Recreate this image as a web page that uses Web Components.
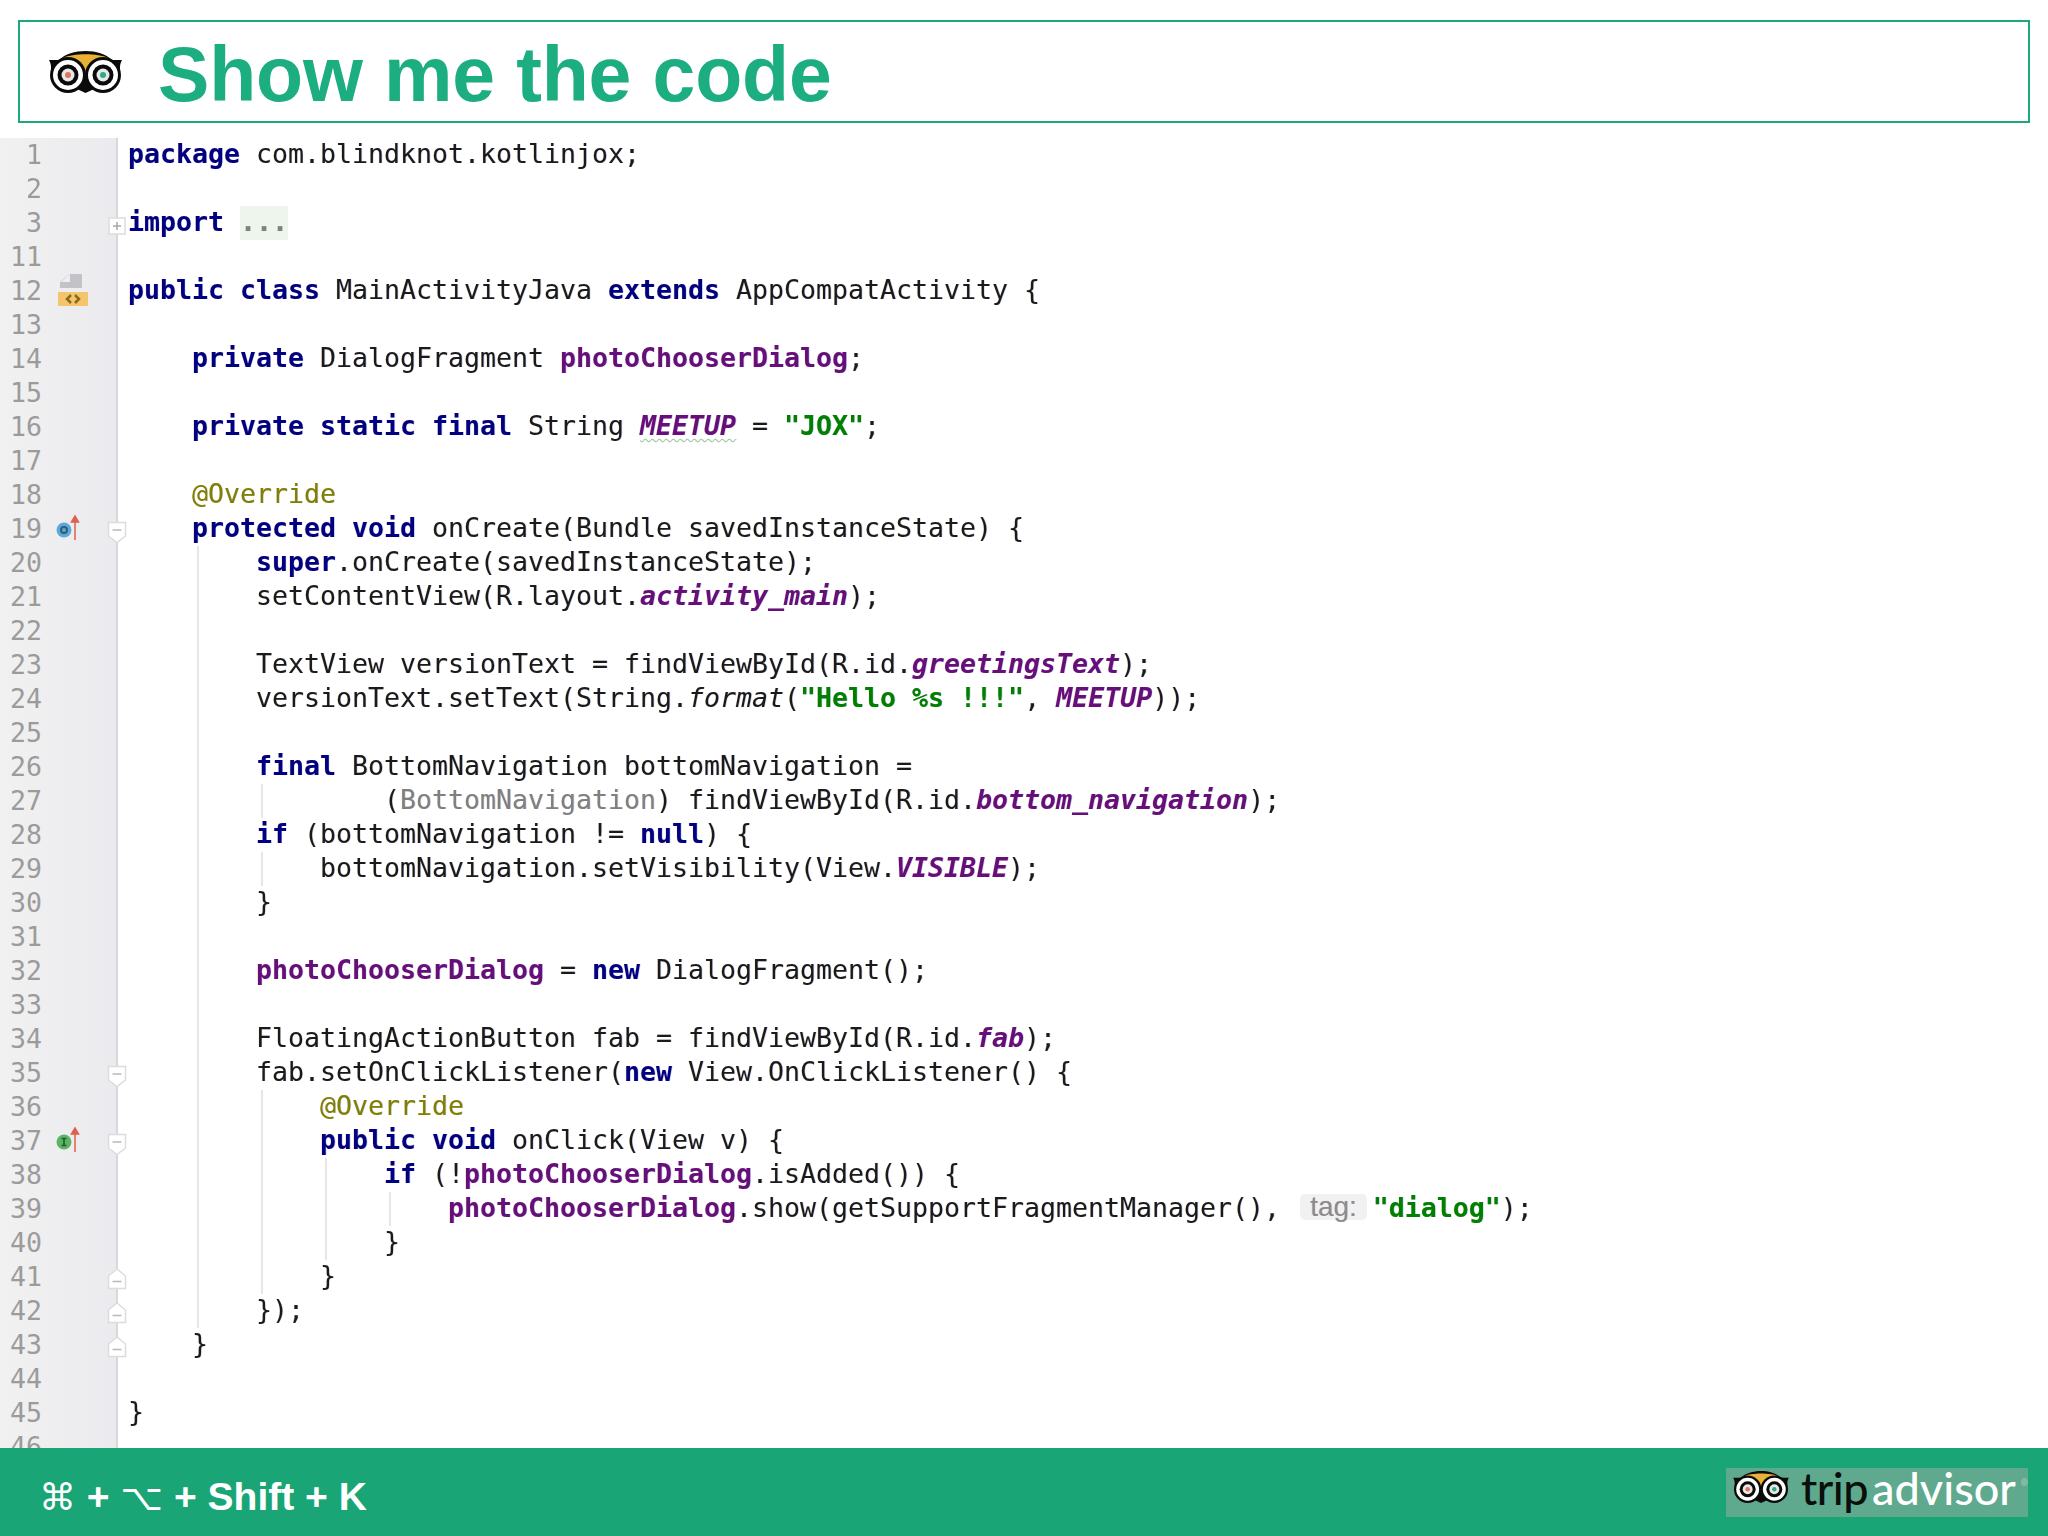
<!DOCTYPE html>
<html>
<head>
<meta charset="utf-8">
<title>Show me the code</title>
<style>
  html, body { margin: 0; height: 100%; background: #fff; }
  code-slide { height: 1536px; }
  .sym { font-weight: normal; font-family: "DejaVu Sans", sans-serif; font-size: 37px; }
</style>
</head>
<body>
<code-slide>
  <span slot="title">Show me the code</span>
  <span slot="shortcut"><span class="sym">⌘</span> + <span class="sym">⌥</span> + Shift + K</span>
</code-slide>

<script>
const ICONS = {
  impl: `<svg width="34" height="34" viewBox="0 0 34 34"><path d="M14 0h12v14H4V8z" fill="#c3c3c7"/><path d="M14 0v8H5z" fill="#eeeeee"/><rect x="2" y="18" width="30" height="14" fill="#f5c56b"/><path d="M15 21l-4 4 4 4M19 21l4 4-4 4" fill="none" stroke="#8a6a20" stroke-width="2.500"/></svg>`,
  over: `<svg width="34" height="34" viewBox="0 0 34 34"><circle cx="8" cy="18" r="7.500" fill="#58a9dc"/><circle cx="8" cy="18" r="3" fill="none" stroke="#3a5a70" stroke-width="2"/><path d="M19 28V6M15.500 10L19 4l3.500 6z" fill="#e0604f" stroke="#e0604f" stroke-width="1.500"/></svg>`,
  impls: `<svg width="34" height="34" viewBox="0 0 34 34"><circle cx="8" cy="18" r="7.500" fill="#5cb564"/><path d="M5.500 14.500h5M5.500 21.500h5M8 14.500v7" fill="none" stroke="#245a2c" stroke-width="1.600"/><path d="M19 28V6M15.500 10L19 4l3.500 6z" fill="#e0604f" stroke="#e0604f" stroke-width="1.500"/></svg>`
};

const FOLDS = {
  plus: `<svg width="20" height="24" viewBox="0 0 20 24"><rect x="2" y="4" width="16" height="16" fill="#fff" stroke="#dcdcdc" stroke-width="1.500"/><path d="M6 12h8M10 8v8" stroke="#a8a8a8" stroke-width="1.500"/></svg>`,
  open: `<svg width="20" height="24" viewBox="0 0 20 24"><path d="M1.500 2.500h17v13.500l-8.500 6.500-8.500-6.500z" fill="#fff" stroke="#dcdcdc" stroke-width="1.500"/><path d="M5.500 10h9" stroke="#b8b8b8" stroke-width="1.500"/></svg>`,
  close: `<svg width="20" height="24" viewBox="0 0 20 24"><path d="M1.500 20.500V8L10 1l8.500 7v12.500z" fill="#fff" stroke="#dcdcdc" stroke-width="1.500"/><path d="M5.500 13.500h9" stroke="#b8b8b8" stroke-width="1.500"/></svg>`
};

// [k:keyword] [f:field] [s:string] [a:annotation] [c:static field] [m:static method] [g:grey cast] [w:wavy field] [h:hint] [d:folded dots]
const ROWS = [
  [1, "[k:package] com.blindknot.kotlinjox;"],
  [2, ""],
  [3, "[k:import] [d:...]", { fold: "plus" }],
  [11, ""],
  [12, "[k:public class] MainActivityJava [k:extends] AppCompatActivity {", { icon: "impl" }],
  [13, ""],
  [14, "    [k:private] DialogFragment [f:photoChooserDialog];"],
  [15, ""],
  [16, "    [k:private static final] String [w:MEETUP] = [s:\"JOX\"];"],
  [17, ""],
  [18, "    [a:@Override]"],
  [19, "    [k:protected void] onCreate(Bundle savedInstanceState) {", { icon: "over", fold: "open" }],
  [20, "        [k:super].onCreate(savedInstanceState);"],
  [21, "        setContentView(R.layout.[c:activity_main]);"],
  [22, ""],
  [23, "        TextView versionText = findViewById(R.id.[c:greetingsText]);"],
  [24, "        versionText.setText(String.[m:format]([s:\"Hello %s !!!\"], [c:MEETUP]));"],
  [25, ""],
  [26, "        [k:final] BottomNavigation bottomNavigation ="],
  [27, "                ([g:BottomNavigation]) findViewById(R.id.[c:bottom_navigation]);"],
  [28, "        [k:if] (bottomNavigation != [k:null]) {"],
  [29, "            bottomNavigation.setVisibility(View.[c:VISIBLE]);"],
  [30, "        }"],
  [31, ""],
  [32, "        [f:photoChooserDialog] = [k:new] DialogFragment();"],
  [33, ""],
  [34, "        FloatingActionButton fab = findViewById(R.id.[c:fab]);"],
  [35, "        fab.setOnClickListener([k:new] View.OnClickListener() {", { fold: "open" }],
  [36, "            [a:@Override]"],
  [37, "            [k:public void] onClick(View v) {", { icon: "impls", fold: "open" }],
  [38, "                [k:if] (![f:photoChooserDialog].isAdded()) {"],
  [39, "                    [f:photoChooserDialog].show(getSupportFragmentManager(),[h:tag:][s:\"dialog\"]);"],
  [40, "                }"],
  [41, "            }", { fold: "close" }],
  [42, "        });", { fold: "close" }],
  [43, "    }", { fold: "close" }],
  [44, ""],
  [45, "}"],
  [46, ""]
];

function guidesFor(n) {
  const cols = [];
  if (n >= 20 && n <= 42) cols.push(4);
  if (n === 27 || n === 29 || (n >= 36 && n <= 41)) cols.push(8);
  if (n >= 38 && n <= 40) cols.push(12);
  if (n === 39) cols.push(16);
  return cols;
}

function markup(src) {
  const esc = s => s.replace(/&/g, "&amp;").replace(/</g, "&lt;");
  let out = "", last = 0;
  src.replace(/\[(\w):([^\]]*)\]/g, (m, cls, txt, at) => {
    out += esc(src.slice(last, at)) + `<span class="${cls}">${esc(txt)}</span>`;
    last = at + m.length;
  });
  return out + esc(src.slice(last));
}

customElements.define("owl-logo", class extends HTMLElement {
  constructor() {
    super();
    this.attachShadow({ mode: "open" }).innerHTML = `
      <style>
        :host { display: block; flex: none; }
        svg { display: block; width: 100%; height: 100%; }
      </style>
      <svg viewBox="0 0 73 42">
        <path d="M0 9h10C16 3 26 0 36.500 0S57 3 63 9h10c-1 2-2 4-2 7v10L36.500 42 2 26V16C2 13 1 11 0 9z" fill="#0b0b0b"/>
        <path d="M14 7C24 2 49 2 59 7L36.500 28z" fill="#e9b237"/>
        <circle cx="19" cy="24" r="18" fill="#0b0b0b"/>
        <circle cx="54" cy="24" r="18" fill="#0b0b0b"/>
        <circle cx="19" cy="24" r="15" fill="#fff"/>
        <circle cx="54" cy="24" r="15" fill="#fff"/>
        <circle cx="19" cy="24" r="10.500" fill="#0b0b0b"/>
        <circle cx="54" cy="24" r="10.500" fill="#0b0b0b"/>
        <circle cx="19" cy="24" r="6.500" fill="#e8e8e8"/>
        <circle cx="54" cy="24" r="6.500" fill="#e8e8e8"/>
        <circle cx="19" cy="24" r="3" fill="#e2735f"/>
        <circle cx="54" cy="24" r="3" fill="#2fa98c"/>
      </svg>`;
  }
});

customElements.define("slide-header", class extends HTMLElement {
  constructor() {
    super();
    this.attachShadow({ mode: "open" }).innerHTML = `
      <style>
        :host {
          display: flex; flex: none; align-items: center;
          height: 99px; margin: 20px 18px 15px; padding-left: 29px;
          border: 2px solid #1ba97c; box-sizing: content-box;
        }
        owl-logo { width: 73px; height: 42px; margin-top: 1px; }
        h1 {
          margin: 5px 0 0 36px; font: bold 77px "Liberation Sans", Arial, sans-serif;
          color: #1cad80; letter-spacing: -0.15px;
        }
      </style>
      <owl-logo></owl-logo>
      <h1><slot></slot></h1>`;
  }
});

customElements.define("trip-badge", class extends HTMLElement {
  constructor() {
    super();
    this.attachShadow({ mode: "open" }).innerHTML = `
      <style>
        :host {
          display: flex; align-items: center; box-sizing: border-box;
          width: 302px; height: 49px; padding: 0 0 8px 6px;
          background: #5fa98e;
          font: 500 45px/39px Lato, sans-serif;
        }
        owl-logo { width: 58px; height: 32px; margin-right: 11px; margin-top: -2px; }
        .trip { color: #0a0f0c; letter-spacing: -0.5px; }
        .advisor { color: #fff; margin-left: 4px; }
        .reg { width: 8px; height: 8px; border-radius: 50%; background: #7fbba3; margin: -12px 0 0 5px; }
      </style>
      <owl-logo></owl-logo>
      <span class="trip">trip</span><span class="advisor">advisor</span><span class="reg"></span>`;
  }
});

customElements.define("slide-footer", class extends HTMLElement {
  constructor() {
    super();
    this.attachShadow({ mode: "open" }).innerHTML = `
      <style>
        :host {
          display: flex; flex: none; align-items: center; justify-content: space-between;
          height: 88px; padding: 0 20px 0 40px;
          background: #19a576; color: #fff;
          font: bold 39px "Liberation Sans", "DejaVu Sans", sans-serif;
        }
        .keys { margin: 10px 0 0 -1px; }
      </style>
      <div class="keys"><slot></slot></div>
      <trip-badge></trip-badge>`;
  }
});

customElements.define("code-row", class extends HTMLElement {
  constructor() {
    super();
    this.attachShadow({ mode: "open" }).innerHTML = `
      <style>
        :host {
          display: grid; grid-template-columns: 118px 1fr; height: 34px;
          font: 26.58px/32px "DejaVu Sans Mono", monospace; color: #1a1a1a;
        }
        .gutter {
          display: flex; position: relative; box-sizing: border-box;
          background: linear-gradient(90deg, #f1f1f1, #ebeaee);
          border-right: 2px solid #d8d8da;
        }
        .num { width: 42px; text-align: right; color: #9b9b9b; line-height: 34px; }
        .icon { width: 34px; height: 34px; margin-left: 14px; }
        .fold { position: absolute; left: 107px; top: 8px; line-height: 0; }
        .code {
          padding-left: 10px; white-space: pre; background-repeat: no-repeat;
          text-shadow: -0.6px 0 rgba(255, 120, 0, 0.22), 0.6px 0 rgba(0, 80, 255, 0.22);
        }
        .k { color: #000080; font-weight: bold; }
        .f { color: #660e7a; font-weight: bold; }
        .s { color: #008000; font-weight: bold; }
        .a { color: #808000; }
        .c { color: #660e7a; font-weight: bold; font-style: italic; }
        .m { font-style: italic; }
        .g { color: #808080; }
        .w {
          color: #660e7a; font-weight: bold; font-style: italic;
          text-decoration: underline wavy #8fc98f 1px; text-underline-offset: 3px;
        }
        .d { color: #808080; font-weight: bold; background: #edf5ed; display: inline-block; height: 34px; }
        .h {
          display: inline-block; height: 26px; margin: 0 6px 0 20px; padding: 0 10px;
          vertical-align: 1px; border-radius: 5px; background: #f1f1f2; color: #8c8c8c;
          font: 28px/26px "Liberation Sans", sans-serif;
        }
      </style>
      <div class="gutter"><span class="num"></span><span class="icon"></span><span class="fold"></span></div>
      <div class="code"></div>`;
  }

  setRow(num, src, opts = {}) {
    const root = this.shadowRoot;
    root.querySelector(".num").textContent = num;
    if (opts.icon) root.querySelector(".icon").innerHTML = ICONS[opts.icon];
    if (opts.fold) root.querySelector(".fold").innerHTML = FOLDS[opts.fold];
    const code = root.querySelector(".code");
    code.innerHTML = markup(src);
    const cols = guidesFor(num);
    if (cols.length) {
      code.style.backgroundImage = cols.map(() => "linear-gradient(#e6e6e8, #e6e6e8)").join(",");
      code.style.backgroundSize = cols.map(() => "2px 100%").join(",");
      code.style.backgroundPosition = cols.map(c => `${10 + c * 16 + 5}px 0`).join(",");
    }
  }
});

customElements.define("code-editor", class extends HTMLElement {
  constructor() {
    super();
    const root = this.attachShadow({ mode: "open" });
    root.innerHTML = `
      <style>
        :host { display: block; flex: 1; min-height: 0; overflow: hidden; }
        .rows { filter: blur(0.45px); }
      </style>
      <div class="rows"></div>`;
    const rows = root.querySelector(".rows");
    ROWS.forEach(([num, src, opts]) => {
      const row = document.createElement("code-row");
      row.setRow(num, src, opts);
      rows.appendChild(row);
    });
  }
});

customElements.define("code-slide", class extends HTMLElement {
  constructor() {
    super();
    this.attachShadow({ mode: "open" }).innerHTML = `
      <style>
        :host { display: flex; flex-direction: column; overflow: hidden; background: #fff; }
      </style>
      <slide-header><slot name="title"></slot></slide-header>
      <code-editor></code-editor>
      <slide-footer><slot name="shortcut"></slot></slide-footer>`;
  }
});
</script>
</body>
</html>
